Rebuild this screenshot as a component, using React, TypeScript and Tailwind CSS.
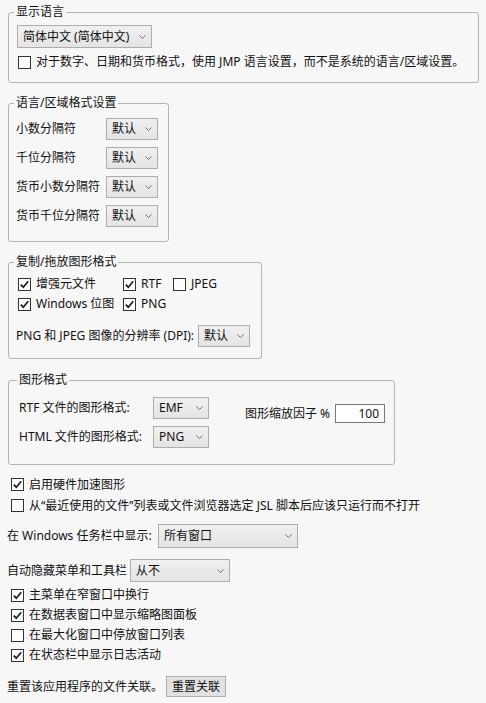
import type { ReactNode } from 'react';

function Chevron() {
  return (
    <svg width="7" height="4" viewBox="0 0 7 4" className="shrink-0">
      <path d="M0.5 0.5 L3.5 3.5 L6.5 0.5" fill="none" stroke="#6f6f6f" strokeWidth="1" />
    </svg>
  );
}

function Select({ value, className = '' }: { value: string; className?: string }) {
  return (
    <div
      className={`flex items-center justify-between border border-[#adadad] bg-linear-to-b from-[#f0f0f0] to-[#e4e4e4] pl-[5px] pr-[5px] ${className}`}
    >
      <span className="whitespace-nowrap">{value}</span>
      <Chevron />
    </div>
  );
}

function Checkbox({ checked, label }: { checked?: boolean; label: string }) {
  return (
    <label className="flex items-center gap-[5px] whitespace-nowrap">
      <span className="flex size-[13px] shrink-0 items-center justify-center border border-[#333] bg-white">
        {checked && (
          <svg width="11" height="11" viewBox="0 0 11 11">
            <path d="M1.8 5.6 L4.3 8.2 L9.2 2.2" fill="none" stroke="#1c1c1c" strokeWidth="1.7" />
          </svg>
        )}
      </span>
      {label}
    </label>
  );
}

function Group({ title, className = '', children }: { title: string; className?: string; children: ReactNode }) {
  return (
    <fieldset className={`ml-[1px] rounded-[3px] border border-[#b4b4b4] pl-[7px] ${className}`}>
      <legend className="ml-[-2px] px-[2px] leading-[16px]">{title}</legend>
      {children}
    </fieldset>
  );
}

const separators = ['小数分隔符', '千位分隔符', '货币小数分隔符', '货币千位分隔符'];

export default function App() {
  return (
    <div
      className="h-[703px] w-[486px] overflow-hidden bg-[#f7f7f7] pl-[7px] pt-[4px] text-[12px] leading-[16px] text-[#111]"
      style={{ fontFamily: '"Noto Sans", "Noto Sans CJK SC", sans-serif' }}
    >
      <Group title="显示语言" className="w-[471px] pb-[12px] pt-[5px]">
        <div className="ml-[1px]">
          <Select value="简体中文 (简体中文)" className="h-[23px] w-[135px]" />
        </div>
        <div className="ml-[2px] mt-[6px]">
          <Checkbox label="对于数字、日期和货币格式，使用 JMP 语言设置，而不是系统的语言/区域设置。" />
        </div>
      </Group>

      <Group title="语言/区域格式设置" className="mt-[12px] w-[161px] pb-[14px] pt-[7px]">
        <div className="flex flex-col gap-[7px]">
          {separators.map((s) => (
            <div key={s} className="flex items-center">
              <span className="w-[90px] whitespace-nowrap">{s}</span>
              <Select value="默认" className="h-[22px] w-[52px]" />
            </div>
          ))}
        </div>
      </Group>

      <Group title="复制/拖放图形格式" className="mt-[12px] w-[254px] pb-[11px] pt-[6px]">
        <div className="ml-[2px] grid grid-cols-[105px_50px_auto] gap-y-[4px]">
          <div className="flex h-[16px] items-center">
            <Checkbox checked label="增强元文件" />
          </div>
          <div className="flex h-[16px] items-center">
            <Checkbox checked label="RTF" />
          </div>
          <div className="flex h-[16px] items-center">
            <Checkbox label="JPEG" />
          </div>
          <div className="flex h-[16px] items-center">
            <Checkbox checked label="Windows 位图" />
          </div>
          <div className="flex h-[16px] items-center">
            <Checkbox checked label="PNG" />
          </div>
        </div>
        <div className="mt-[13px] flex items-center gap-[4px]">
          <span className="whitespace-nowrap">PNG 和 JPEG 图像的分辨率 (DPI):</span>
          <Select value="默认" className="h-[22px] w-[52px]" />
        </div>
      </Group>

      <Group title="图形格式" className="mt-[13px] w-[387px] pb-[16px] pl-[10px] pt-[9px]">
        <div className="flex">
          <div className="flex flex-col gap-[7px]">
            <div className="flex items-center">
              <span className="w-[134px] whitespace-nowrap">RTF 文件的图形格式:</span>
              <Select value="EMF" className="h-[22px] w-[56px]" />
            </div>
            <div className="flex items-center">
              <span className="w-[134px] whitespace-nowrap">HTML 文件的图形格式:</span>
              <Select value="PNG" className="h-[22px] w-[56px]" />
            </div>
          </div>
          <div className="ml-[36px] mt-[7px] flex h-[19px] items-center">
            <span className="w-[90px] whitespace-nowrap">图形缩放因子 %</span>
            <div className="flex h-[19px] w-[50px] items-center justify-end border border-[#7a7a7a] bg-white pr-[5px]">
              100
            </div>
          </div>
        </div>
      </Group>

      <div className="ml-[4px] mt-[9px] flex flex-col">
        <div className="flex h-[21px] items-center">
          <Checkbox checked label="启用硬件加速图形" />
        </div>
        <div className="flex h-[21px] items-center">
          <Checkbox label="从“最近使用的文件”列表或文件浏览器选定 JSL 脚本后应该只运行而不打开" />
        </div>
      </div>

      <div className="mt-[8px] flex items-center">
        <span className="w-[151px] whitespace-nowrap">在 Windows 任务栏中显示:</span>
        <Select value="所有窗口" className="h-[24px] w-[140px]" />
      </div>

      <div className="mt-[11px] flex items-center">
        <span className="w-[123px] whitespace-nowrap">自动隐藏菜单和工具栏</span>
        <Select value="从不" className="h-[23px] w-[100px]" />
      </div>

      <div className="ml-[4px] mt-[3px] flex flex-col">
        <div className="flex h-[20px] items-center">
          <Checkbox checked label="主菜单在窄窗口中换行" />
        </div>
        <div className="flex h-[20px] items-center">
          <Checkbox checked label="在数据表窗口中显示缩略图面板" />
        </div>
        <div className="flex h-[20px] items-center">
          <Checkbox label="在最大化窗口中停放窗口列表" />
        </div>
        <div className="flex h-[20px] items-center">
          <Checkbox checked label="在状态栏中显示日志活动" />
        </div>
      </div>

      <div className="mt-[11px] flex items-center">
        <span className="w-[159px] whitespace-nowrap">重置该应用程序的文件关联。</span>
        <button
          type="button"
          className="flex h-[21px] w-[60px] items-center justify-center border border-[#adadad] bg-[#e1e1e1]"
        >
          重置关联
        </button>
      </div>
    </div>
  );
}
